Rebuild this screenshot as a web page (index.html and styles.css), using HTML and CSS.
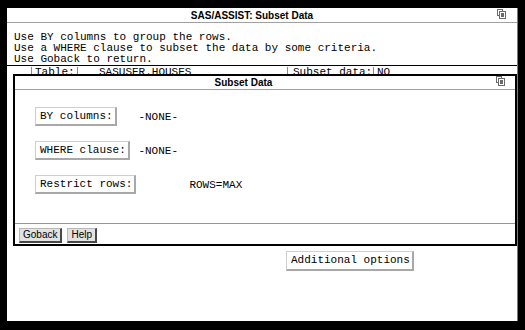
FILE: index.html
```html
<!DOCTYPE html>
<html>
<head>
<meta charset="utf-8">
<title>SAS/ASSIST: Subset Data</title>
<link rel="stylesheet" href="styles.css">
</head>
<body>
<div class="desktop">
  <div class="window">
    <div class="titlebar">
      <span class="title">SAS/ASSIST: Subset Data</span>
      <svg class="win-icon" width="9" height="10" viewBox="0 0 9 10"><rect x="0.5" y="0.5" width="5" height="6" fill="#fff" stroke="#6a6a6a"/><rect x="2.5" y="2.5" width="6" height="7" fill="#fff" stroke="#6a6a6a"/><rect x="4" y="4" width="3" height="4" fill="#6a6a6a"/></svg>
    </div>
    <div class="message">
      <div class="line">Use BY columns to group the rows.</div>
      <div class="line">Use a WHERE clause to subset the data by some criteria.</div>
      <div class="line">Use Goback to return.</div>
    </div>
    <div class="info-row">
      <span class="cell c1">Table:</span>
      <span class="cell c2">SASUSER.HOUSES</span>
      <span class="cell c3">Subset data:</span>
      <span class="cell c4">NO</span>
    </div>
    <div class="actions">
      <button class="btn">Additional options</button>
    </div>

    <div class="dialog">
      <div class="titlebar inner">
        <span class="title">Subset Data</span>
        <svg class="win-icon" width="9" height="10" viewBox="0 0 9 10"><rect x="0.5" y="0.5" width="5" height="6" fill="#fff" stroke="#6a6a6a"/><rect x="2.5" y="2.5" width="6" height="7" fill="#fff" stroke="#6a6a6a"/><rect x="4" y="4" width="3" height="4" fill="#6a6a6a"/></svg>
      </div>
      <div class="dialog-body">
        <div class="grid">
          <button class="btn">BY columns:</button>
          <span class="value">-NONE-</span>
          <button class="btn">WHERE clause:</button>
          <span class="value">-NONE-</span>
          <button class="btn">Restrict rows:</button>
          <span class="value rows">ROWS=MAX</span>
        </div>
      </div>
      <div class="dialog-footer">
        <button class="cmd">Goback</button>
        <button class="cmd">Help</button>
      </div>
    </div>
  </div>
</div>
</body>
</html>
```
FILE: styles.css
```css
html, body {
  margin: 0;
  padding: 0;
  background: #000;
}
body {
  width: 525px;
  height: 330px;
  overflow: hidden;
  font-family: "Liberation Mono", monospace;
  font-size: 11px;
  color: #000;
}
.desktop {
  padding: 8px 7px 0 7px;
}
.window {
  position: relative;
  box-sizing: border-box;
  width: 511px;
  height: 313px;
  background: #fff;
  border-right: 1px solid #7a7a7a;
  display: flex;
  flex-direction: column;
  overflow: hidden;
}
.titlebar {
  box-sizing: border-box;
  height: 15px;
  padding-top: 1px;
  border-bottom: 1px solid #a0a0a0;
  display: flex;
  align-items: flex-start;
  font-family: "Liberation Sans", Arial, sans-serif;
  font-weight: bold;
  font-size: 10px;
  line-height: 13px;
  flex: none;
}
.titlebar .title {
  flex: 1;
  text-align: center;
}
.win-icon {
  display: block;
  margin-right: 11px;
  margin-left: 0;
}
.message {
  padding: 9px 0 0 7px;
  line-height: 11px;
  flex: none;
}
.line {
  white-space: pre;
  height: 11px;
}
.info-row {
  border-top: 1px solid #000;
  display: flex;
  padding-left: 24px;
  line-height: 11px;
  padding-top: 1px;
  flex: none;
}
.cell {
  border-left: 1px solid #8a8a8a;
  box-sizing: border-box;
  white-space: pre;
}
.c1 { width: 46px; padding-left: 3px; }
.c2 { width: 210px; padding-left: 21px; }
.c3 { width: 86px; padding-left: 5px; }
.c4 { padding-left: 3px; }
.actions {
  padding: 173px 0 0 279px;
  flex: none;
}
.btn {
  font-family: "Liberation Mono", monospace;
  font-size: 11px;
  color: #000;
  background: #fff;
  margin: 0;
  border-style: solid;
  border-width: 1px 2px 2px 1px;
  border-color: #cfcfcf #a8a8a8 #a8a8a8 #cfcfcf;
  padding: 0 2px 0 4px;
  border-radius: 0;
  white-space: pre;
  text-align: left;
}
.actions .btn {
  height: 20px;
  line-height: 17px;
}
.dialog {
  position: absolute;
  top: 66px;
  left: 6px;
  width: 504px;
  height: 172px;
  box-sizing: border-box;
  border: 2px solid #000;
  background: #fff;
  display: flex;
  flex-direction: column;
}
.titlebar.inner {
  height: 14px;
  padding-top: 0;
}
.titlebar.inner .title {
  padding-right: 24px;
}
.titlebar.inner .win-icon {
  margin-right: 10px;
}
.dialog-body {
  flex: 1;
  padding: 17px 0 0 20px;
}
.grid {
  display: grid;
  grid-template-columns: max-content max-content;
  grid-auto-rows: 19px;
  row-gap: 15px;
  column-gap: 2px;
  align-items: center;
  justify-items: start;
}
.grid .btn {
  height: 19px;
  line-height: 16px;
}
.value {
  white-space: pre;
}
.value.rows {
  padding-left: 51px;
}
.dialog-footer {
  border-top: 1px solid #959595;
  height: 21px;
  box-sizing: border-box;
  padding: 4px 0 0 4px;
  display: flex;
  gap: 5px;
  align-items: flex-start;
  flex: none;
}
.cmd {
  font-family: "Liberation Sans", Arial, sans-serif;
  font-size: 10px;
  color: #000;
  background: #e2e2e2;
  margin: 0;
  height: 15px;
  line-height: 12px;
  padding: 0 3px;
  border-style: solid;
  border-width: 1px 2px 2px 1px;
  border-color: #b8b8b8 #474747 #474747 #b8b8b8;
  border-radius: 0;
}
```
